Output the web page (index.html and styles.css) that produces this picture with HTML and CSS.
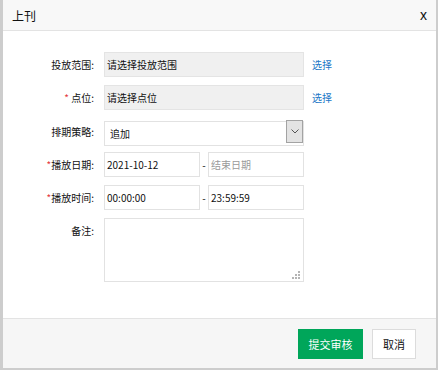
FILE: index.html
```html
<!DOCTYPE html>
<html lang="zh-CN">
<head>
    <meta charset="UTF-8" />
    <meta name="viewport" content="width=device-width, initial-scale=1.0"/>
    <title>上刊</title>
    <link rel="stylesheet" href="styles.css">
</head>
<body>
    <div class="dialog">
        <div class="dialog-header">
            <span class="dialog-title">上刊</span>
            <span class="dialog-close">x</span>
        </div>

        <form class="dialog-body">
            <!-- 投放范围 -->
            <div class="form-row">
                <label class="form-label">投放范围:</label>
                <input class="input input-readonly" type="text" readonly value="请选择投放范围" />
                <a class="link">选择</a>
            </div>

            <!-- 点位 -->
            <div class="form-row">
                <label class="form-label"><span class="required">*</span> 点位:</label>
                <input class="input input-readonly" type="text" readonly value="请选择点位" />
                <a class="link">选择</a>
            </div>

            <!-- 排期策略 -->
            <div class="form-row">
                <label class="form-label">排期策略:</label>
                <div class="select-wrap">
                    <select class="input select">
                        <option>追加</option>
                    </select>
                    <span class="select-arrow">
                        <svg width="8" height="5" viewBox="0 0 8 5"><path d="M0.5 0.5 L4 4 L7.5 0.5" fill="none" stroke="#555" stroke-width="1"/></svg>
                    </span>
                </div>
            </div>

            <!-- 播放日期 -->
            <div class="form-row">
                <label class="form-label"><span class="required">*</span>播放日期:</label>
                <div class="range">
                    <input class="input input-half" type="text" value="2021-10-12" />
                    <span class="range-sep">-</span>
                    <input class="input input-half" type="text" placeholder="结束日期" />
                </div>
            </div>

            <!-- 播放时间 -->
            <div class="form-row">
                <label class="form-label"><span class="required">*</span>播放时间:</label>
                <div class="range">
                    <input class="input input-half" type="text" value="00:00:00" />
                    <span class="range-sep">-</span>
                    <input class="input input-half" type="text" value="23:59:59" />
                </div>
            </div>

            <!-- 备注 -->
            <div class="form-row form-row-top">
                <label class="form-label">备注:</label>
                <div class="textarea-wrap">
                    <textarea class="input textarea"></textarea>
                    <svg class="resize-grip" width="8" height="8" viewBox="0 0 8 8">
                        <rect x="6" y="0" width="2" height="2" fill="#b4b4b4"/>
                        <rect x="3" y="3" width="2" height="2" fill="#b4b4b4"/>
                        <rect x="6" y="3" width="2" height="2" fill="#b4b4b4"/>
                        <rect x="0" y="6" width="2" height="2" fill="#b4b4b4"/>
                        <rect x="3" y="6" width="2" height="2" fill="#b4b4b4"/>
                        <rect x="6" y="6" width="2" height="2" fill="#b4b4b4"/>
                    </svg>
                </div>
            </div>
        </form>

        <div class="dialog-footer">
            <button type="button" class="btn btn-primary">提交审核</button>
            <button type="button" class="btn btn-default">取消</button>
        </div>
    </div>
</body>
</html>
```

FILE: styles.css
```css
html, body {
    margin: 0;
    height: 100%;
}

body {
    background-color: #cdcdcd;
    font-family: "Noto Sans CJK SC", "Noto Sans", sans-serif;
    color: #222;
    padding: 0 2px 0 3px;
    box-sizing: border-box;
}

.dialog {
    width: 433px;
    height: 368px;
    background-color: #fff;
    display: flex;
    flex-direction: column;
}

.dialog-header {
    height: 30px;
    background-color: #f8f8f8;
    border-bottom: 1px solid #e3e3e3;
    display: flex;
    justify-content: space-between;
    align-items: center;
    padding: 0 9px;
}

.dialog-title {
    font-size: 12px;
    color: #111;
}

.dialog-close {
    font-size: 14px;
    font-family: "Liberation Sans", sans-serif;
    color: #111;
    cursor: pointer;
}

.dialog-body {
    flex: 1;
    margin: 0;
    padding-top: 21px;
    display: flex;
    flex-direction: column;
    gap: 8.3px;
}

.form-row {
    display: flex;
    align-items: center;
    height: 25px;
}

.form-row-top {
    align-items: flex-start;
    height: 64px;
}

.form-row-top .form-label {
    line-height: 25px;
}

.form-label {
    width: 91px;
    margin-right: 10px;
    text-align: right;
    font-size: 10px;
    color: #111;
}

.required {
    color: #e4393c;
}

.input {
    box-sizing: border-box;
    height: 25px;
    width: 200px;
    border: 1px solid #e2e2e2;
    padding: 0 2px;
    margin: 0;
    font-family: "Noto Sans CJK SC", "Noto Sans", sans-serif;
    font-size: 10px;
    color: #111;
    background-color: #fff;
    outline: none;
}

.input::placeholder {
    color: #9a9a9a;
}

.input-readonly {
    background-color: #f0f0f0;
    border-color: #e4e4e4;
}

.link {
    margin-left: 8px;
    font-size: 10px;
    color: #1a76c6;
    cursor: pointer;
}

.select-wrap {
    position: relative;
    width: 200px;
    height: 25px;
}

.select {
    appearance: none;
    -webkit-appearance: none;
    padding-left: 5px;
}

.select-arrow {
    position: absolute;
    top: 1px;
    right: 1px;
    width: 17px;
    height: 23px;
    box-sizing: border-box;
    background-color: #e3e3e3;
    border: 1px solid #a3a3a3;
    display: flex;
    align-items: center;
    justify-content: center;
    pointer-events: none;
}

.range {
    display: flex;
    align-items: center;
    width: 200px;
}

.input-half {
    width: 96px;
}

.range-sep {
    width: 8px;
    text-align: center;
    font-size: 10px;
    color: #111;
}

.textarea-wrap {
    position: relative;
    width: 200px;
    height: 64px;
}

.textarea {
    height: 64px;
    resize: none;
    display: block;
}

.resize-grip {
    position: absolute;
    right: 4px;
    bottom: 3px;
}

.dialog-footer {
    height: 49px;
    border-top: 1px solid #e3e3e3;
    background-color: #f6f6f6;
    display: flex;
    justify-content: flex-end;
    align-items: center;
    gap: 9px;
    padding-right: 20px;
}

.btn {
    height: 30px;
    border: 1px solid transparent;
    font-family: "Noto Sans CJK SC", "Noto Sans", sans-serif;
    font-size: 11px;
    cursor: pointer;
    padding: 0;
}

.btn-primary {
    width: 65px;
    background-color: #00a65a;
    border-color: #00a65a;
    color: #fff;
}

.btn-default {
    width: 44px;
    background-color: #fff;
    border-color: #dcdcdc;
    color: #111;
}
```
